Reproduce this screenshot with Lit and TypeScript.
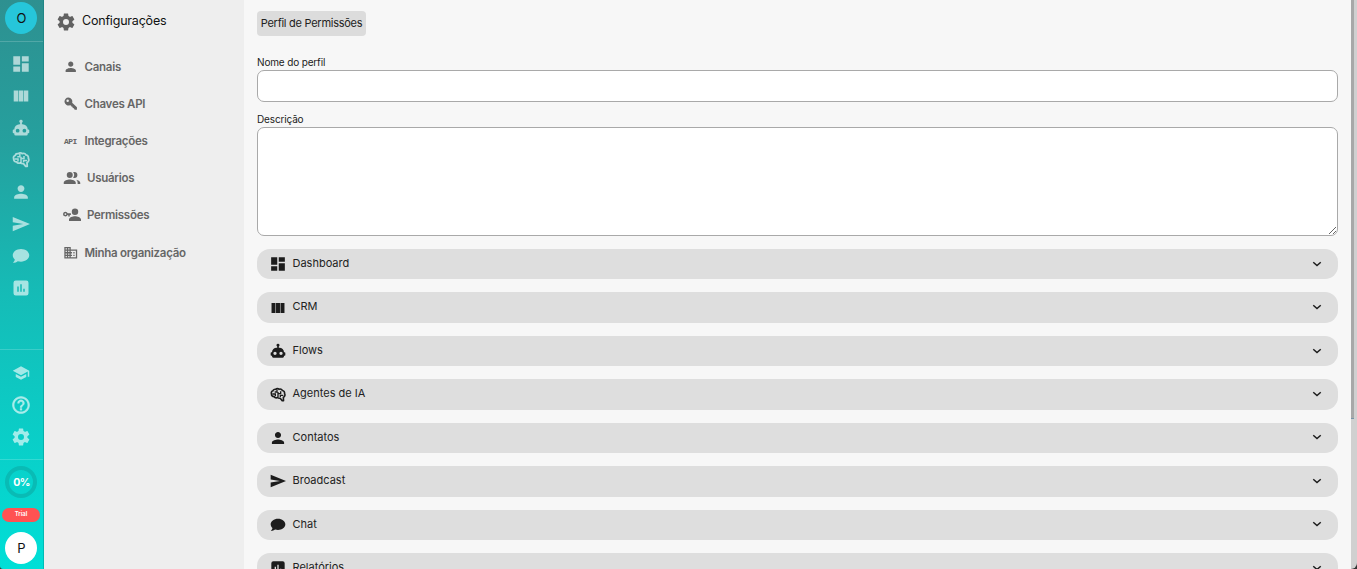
import { LitElement, html, svg, css } from 'lit';
import { customElement, property } from 'lit/decorators.js';

const icons: Record<string, unknown> = {
  dashboard: svg`<path d="M3 13h8V3H3v10zm0 8h8v-6H3v6zm10 0h8V11h-8v10zm0-18v6h8V3h-8z"/>`,
  columns: svg`<path d="M3.500 5.500h5.200v13H3.500zM9.400 5.500h5.200v13H9.400zM15.300 5.500h5.200v13h-5.200z"/>`,
  robot: svg`<path fill-rule="evenodd" d="M12 1a2.200 2.200 0 0 1 1.200 4.100V7H14a7 7 0 0 1 7 7h1a1 1 0 0 1 1 1v3a1 1 0 0 1-1 1h-1v1a2 2 0 0 1-2 2H5a2 2 0 0 1-2-2v-1H2a1 1 0 0 1-1-1v-3a1 1 0 0 1 1-1h1a7 7 0 0 1 7-7h.8V5.100A2.200 2.200 0 0 1 12 1M7.500 13a2.500 2.500 0 1 0 0 5 2.500 2.500 0 0 0 0-5m9 0a2.500 2.500 0 1 0 0 5 2.500 2.500 0 0 0 0-5"/>`,
  brain: svg`<path fill="none" stroke="currentColor" stroke-width="2.400" stroke-linejoin="round" d="M8.500 3.500c1.500-1.500 3.800-1.500 5 0 2-1 4.500 0 5 1.700 2.300.3 3.700 2.300 3.300 4.500 1.300 2.200.4 4.800-1.800 5.600l.3 5.200h-2l-3-3.700c-1.500.3-3 0-4-1-2 1-4.300.4-5-1.400-2.600.2-4.300-1.600-4-3.900-.9-2.300.2-4.200 2.200-4.800C4.800 4.200 6.500 3 8.500 3.500z"/><path fill="none" stroke="currentColor" stroke-width="2" d="M10.500 4v3.500H7M3.500 10.500H8V14M12 10h4V6.500M12 7.500v8M15.500 15v-2.500H20"/>`,
  person: svg`<path d="M12 12c2.210 0 4-1.790 4-4s-1.790-4-4-4-4 1.790-4 4 1.790 4 4 4zm0 2c-2.670 0-8 1.340-8 4v2h16v-2c0-2.660-5.330-4-8-4z"/>`,
  send: svg`<path d="M1 21.500 24 12 1 2.500v7.300L15 12 1 14.200z"/>`,
  chat: svg`<path d="M12 2.500C5.900 2.500 1 6.300 1 11c0 2.200 1 4.100 2.700 5.600-.2 1.700-1.200 3.200-2.500 4.400 2.700 0 4.900-.9 6.400-2.100 1.400.4 2.900.6 4.400.6 6.100 0 11-3.800 11-8.500s-4.900-8.500-11-8.500z"/>`,
  report: svg`<path d="M19 2H5a3 3 0 0 0-3 3v14a3 3 0 0 0 3 3h14a3 3 0 0 0 3-3V5a3 3 0 0 0-3-3zM9 17H7v-7h2v7zm4 0h-2V7h2v10zm4 0h-2v-4h2v4z"/>`,
  school: svg`<path d="M5 13.180v4L12 21l7-3.820v-4L12 17l-7-3.820zM12 3 1 9l11 6 9-4.910V17h2V9L12 3z"/>`,
  help: svg`<path d="M11 18h2v-2h-2v2zm1-16C6.480 2 2 6.480 2 12s4.480 10 10 10 10-4.480 10-10S17.520 2 12 2zm0 18c-4.410 0-8-3.590-8-8s3.590-8 8-8 8 3.590 8 8-3.590 8-8 8zm0-14c-2.210 0-4 1.790-4 4h2c0-1.100.9-2 2-2s2 .9 2 2c0 2-3 1.750-3 5h2c0-2.250 3-2.500 3-5 0-2.210-1.790-4-4-4z" stroke="currentColor" stroke-width=".5"/>`,
  gear: svg`<path d="M12 15.500A3.500 3.500 0 0 1 8.500 12 3.500 3.500 0 0 1 12 8.500a3.500 3.500 0 0 1 3.500 3.500 3.500 3.500 0 0 1-3.500 3.500m7.430-2.530c.04-.32.07-.64.07-.97s-.03-.66-.07-1l2.110-1.630c.19-.15.24-.42.12-.64l-2-3.460c-.12-.22-.39-.31-.61-.22l-2.490 1c-.52-.39-1.060-.73-1.690-.98l-.37-2.650A.506.506 0 0 0 14 2h-4c-.25 0-.46.18-.5.42l-.37 2.650c-.63.25-1.170.59-1.690.98l-2.490-1c-.22-.09-.49 0-.61.22l-2 3.460c-.13.22-.07.49.12.64L4.570 11c-.04.34-.07.67-.07 1s.03.65.07.97l-2.110 1.660c-.19.15-.25.42-.12.64l2 3.460c.12.22.39.3.61.22l2.490-1.010c.52.4 1.060.74 1.690.99l.37 2.650c.04.24.25.42.5.42h4c.25 0 .46-.18.5-.42l.37-2.650c.63-.26 1.170-.59 1.690-.99l2.490 1.010c.22.08.49 0 .61-.22l2-3.460c.12-.22.07-.49-.12-.64z"/>`,
  key: svg`<path fill-rule="evenodd" d="M8 1a7 7 0 1 0 2.500 13.500l2 .5.500 2 2 .5.500 2 2 .5 1.500 2.500H23v-4.500l-8.500-8A7 7 0 0 0 8 1M6.500 4.300a2.200 2.200 0 1 1 0 4.400 2.200 2.200 0 0 1 0-4.400"/>`,
  group: svg`<path d="M9 12a4 4 0 1 0 0-8 4 4 0 0 0 0 8zm6.200 0a4 4 0 1 0 0-8c-.6 0-1.200.1-1.700.4a5.800 5.800 0 0 1 0 7.200c.5.3 1.100.4 1.700.4zM9 14c-3 0-8 1.500-8 4.300V20h16v-1.700C17 15.500 12 14 9 14zm8.300.3c1.300 1 2.200 2.300 2.200 4V20H23v-1.700c0-2.100-2.900-3.400-5.700-4z"/>`,
  keyPerson: svg`<path fill-rule="evenodd" d="M16 12a4.300 4.300 0 1 0 0-8.600 4.300 4.300 0 0 0 0 8.600zm0 1.500c-3 0-8 1.500-8 4.500v2h16v-2c0-3-5-4.500-8-4.500zM3.200 7.500a3.200 3.200 0 1 0 3 4.500H7v2h2v-2h1.500V9.800H6.200a3.200 3.200 0 0 0-3-2.300m0 2.100a1.200 1.200 0 1 1 0 2.400 1.200 1.200 0 0 1 0-2.400"/>`,
  building: svg`<path d="M12 7V3H2v18h20V7H12zM6 19H4v-2h2v2zm0-4H4v-2h2v2zm0-4H4V9h2v2zm0-4H4V5h2v2zm4 12H8v-2h2v2zm0-4H8v-2h2v2zm0-4H8V9h2v2zm0-4H8V5h2v2zm10 12h-8v-2h2v-2h-2v-2h2v-2h-2V9h8v10zm-2-8h-2v2h2v-2zm0 4h-2v2h2v-2z"/>`,
  chevron: svg`<path fill="none" stroke="currentColor" stroke-width="3" d="M4.500 8.500l7.500 6.500 7.500-6.500"/>`,
};

// glyphs drawn with a wide margin get a tighter box
const tight = ['dashboard', 'columns', 'person', 'help', 'gear', 'building'];

const sections = [
  { icon: 'dashboard', label: 'Dashboard' },
  { icon: 'columns', label: 'CRM' },
  { icon: 'robot', label: 'Flows' },
  { icon: 'brain', label: 'Agentes de IA' },
  { icon: 'person', label: 'Contatos' },
  { icon: 'send', label: 'Broadcast' },
  { icon: 'chat', label: 'Chat' },
  { icon: 'report', label: 'Relatórios' },
];

const menu = [
  { icon: 'person', label: 'Canais' },
  { icon: 'key', label: 'Chaves API' },
  { icon: 'api', label: 'Integrações' },
  { icon: 'group', label: 'Usuários', wide: true },
  { icon: 'keyPerson', label: 'Permissões', wide: true },
  { icon: 'building', label: 'Minha organização' },
];

@customElement('app-icon')
export class AppIcon extends LitElement {
  @property() name = '';

  static styles = css`
    :host {
      display: block;
      flex: none;
      width: 18px;
      height: 18px;
    }

    svg {
      display: block;
      width: 100%;
      height: 100%;
      fill: currentColor;
    }
  `;

  render() {
    const viewBox = tight.includes(this.name) ? '1.5 1.5 21 21' : '0 0 24 24';

    return html`<svg viewBox=${viewBox}>${icons[this.name]}</svg>`;
  }
}

@customElement('app-rail')
export class AppRail extends LitElement {
  static styles = css`
    :host {
      box-sizing: border-box;
      display: flex;
      flex-direction: column;
      width: 44px;
      height: 569px;
      border-right: 1px solid rgba(0, 110, 110, 0.3);
      background: linear-gradient(#2e9090, #25a09e 25%, #15bcb7 52%, #00dfd7);
    }

    .top,
    .group,
    .bottom {
      display: flex;
      flex-direction: column;
      align-items: center;
      box-sizing: border-box;
      padding-right: 1px;
    }

    .top,
    .group {
      border-bottom: 1px solid rgba(255, 255, 255, 0.18);
    }

    .top {
      height: 42px;
      padding-top: 2px;
    }

    .group {
      gap: 14px;
      padding-top: 13px;
      color: rgba(255, 255, 255, 0.62);
    }

    .main {
      height: 308px;
    }

    .help {
      height: 110px;
      padding-top: 14px;
    }

    .bottom {
      padding-top: 6px;
    }

    .avatar,
    .ring {
      display: flex;
      align-items: center;
      justify-content: center;
      box-sizing: border-box;
      width: 32px;
      height: 32px;
      padding-left: 1px;
      border-radius: 50%;
      font-size: 13px;
      color: #111;
      background: #26c6da;
    }

    .white {
      background: #fff;
    }

    .ring {
      border: 4px solid #09bbb5;
      font-size: 10.500px;
      font-weight: 700;
      color: #fff;
      background: none;
      letter-spacing: -0.600px;
    }

    .trial {
      width: 38px;
      height: 14px;
      margin: 10px 0;
      border-radius: 7px;
      font-size: 6px;
      font-weight: 600;
      line-height: 12px;
      text-align: center;
      color: #fff;
      background: #ff5252;
    }
  `;

  render() {
    return html`
      <div class="top"><div class="avatar">O</div></div>
      <div class="group main">
        ${sections.map((item) => html`<app-icon name=${item.icon}></app-icon>`)}
      </div>
      <div class="group help">
        <app-icon name="school"></app-icon>
        <app-icon name="help"></app-icon>
        <app-icon name="gear"></app-icon>
      </div>
      <div class="bottom">
        <div class="ring">0%</div>
        <div class="trial">Trial</div>
        <div class="avatar white">P</div>
      </div>
    `;
  }
}

@customElement('settings-menu')
export class SettingsMenu extends LitElement {
  static styles = css`
    :host {
      display: block;
      width: 200px;
      height: 569px;
      background: #eee;
    }

    .title {
      display: flex;
      align-items: center;
      gap: 7px;
      height: 42px;
      padding: 0 0 6px 13px;
      box-sizing: border-box;
      margin-top: 3px;
      font-size: 12.500px;
      letter-spacing: -0.200px;
      color: #111;
    }

    .title app-icon {
      color: #616161;
      margin-top: 1px;
    }

    .title span {
      margin-top: -2px;
    }

    .items {
      display: flex;
      flex-direction: column;
      padding: 3.500px 0 0 20px;
    }

    .item {
      display: flex;
      align-items: center;
      gap: 7px;
      height: 37.100px;
      font-size: 11.500px;
      font-weight: 600;
      letter-spacing: -0.270px;
      color: #666;
    }

    .item app-icon {
      width: 13.500px;
      height: 13.500px;
    }

    .item .wide {
      width: 18px;
      height: 18px;
      margin: 0 -1px 0 -1px;
    }

    .item .api {
      width: 13.500px;
      font-family: 'Liberation Mono', monospace;
      font-size: 8px;
      font-weight: 700;
      letter-spacing: -0.500px;
    }
  `;

  renderIcon(item: { icon: string; wide?: boolean }) {
    if (item.icon === 'api') {
      return html`<span class="api">API</span>`;
    }

    return html`<app-icon class=${item.wide ? 'wide' : ''} name=${item.icon}></app-icon>`;
  }

  render() {
    return html`
      <div class="title"><app-icon name="gear"></app-icon><span>Configurações</span></div>
      <div class="items">
        ${menu.map(
          (item) => html`
            <div class="item">
              ${this.renderIcon(item)}
              <span>${item.label}</span>
            </div>
          `
        )}
      </div>
    `;
  }
}

@customElement('permission-form')
export class PermissionForm extends LitElement {
  static styles = css`
    :host {
      display: block;
      box-sizing: border-box;
      flex: 1;
      height: 569px;
      padding: 11px 13px 0;
      overflow: hidden;
      background: #f7f7f7;
      color: #222;
      font-size: 11px;
    }

    .badge {
      display: flex;
      align-items: center;
      justify-content: center;
      box-sizing: border-box;
      width: 109px;
      height: 25px;
      padding-bottom: 1px;
      border-radius: 4px;
      letter-spacing: -0.270px;
      background: #dcdcdc;
    }

    label {
      display: block;
      height: 14px;
      line-height: 12px;
      font-size: 10px;
      letter-spacing: -0.150px;
    }

    .name-label {
      margin-top: 20px;
    }

    .description-label {
      margin-top: 11px;
    }

    input,
    textarea {
      display: block;
      box-sizing: border-box;
      width: 100%;
      border: 1px solid #a9a9a9;
      border-radius: 7px;
      background: #fff;
    }

    input {
      height: 32px;
    }

    textarea {
      height: 109px;
      resize: vertical;
    }

    .sections {
      display: flex;
      flex-direction: column;
      gap: 13.050px;
      margin-top: 13px;
    }

    .section {
      display: flex;
      align-items: center;
      box-sizing: border-box;
      height: 30.400px;
      padding: 0 15px 0 13px;
      border-radius: 13px;
      background: #dedede;
    }

    .section app-icon {
      width: 16px;
      height: 16px;
      color: #1c1c1c;
    }

    .section span {
      flex: 1;
      margin-left: 6.500px;
      margin-top: -2.500px;
    }

    .section .chevron {
      width: 12px;
      height: 12px;
      margin-top: -1px;
    }
  `;

  render() {
    return html`
      <div class="badge">Perfil de Permissões</div>
      <label class="name-label" for="name">Nome do perfil</label>
      <input id="name" type="text" />
      <label class="description-label" for="description">Descrição</label>
      <textarea id="description"></textarea>
      <div class="sections">
        ${sections.map(
          (item) => html`
            <div class="section">
              <app-icon name=${item.icon}></app-icon>
              <span>${item.label}</span>
              <app-icon class="chevron" name="chevron"></app-icon>
            </div>
          `
        )}
      </div>
    `;
  }
}

@customElement('app-root')
export class AppRoot extends LitElement {
  static styles = css`
    :host {
      display: flex;
      width: 1357px;
      height: 569px;
      overflow: hidden;
      background: #333;
      font-family: Inter, 'Liberation Sans', sans-serif;
    }

    .window {
      display: flex;
      width: 100%;
      height: 100%;
      overflow: hidden;
      border-radius: 0 0 6px 3px;
    }

    .scrollbar {
      width: 6px;
      background: #d0d0d0;
    }

    .thumb {
      width: 3px;
      height: 418px;
      background: #a8a8a8;
      border-bottom: 1px solid #7895a8;
    }
  `;

  render() {
    return html`
      <div class="window">
        <app-rail></app-rail>
        <settings-menu></settings-menu>
        <permission-form></permission-form>
        <div class="scrollbar"><div class="thumb"></div></div>
      </div>
    `;
  }
}
